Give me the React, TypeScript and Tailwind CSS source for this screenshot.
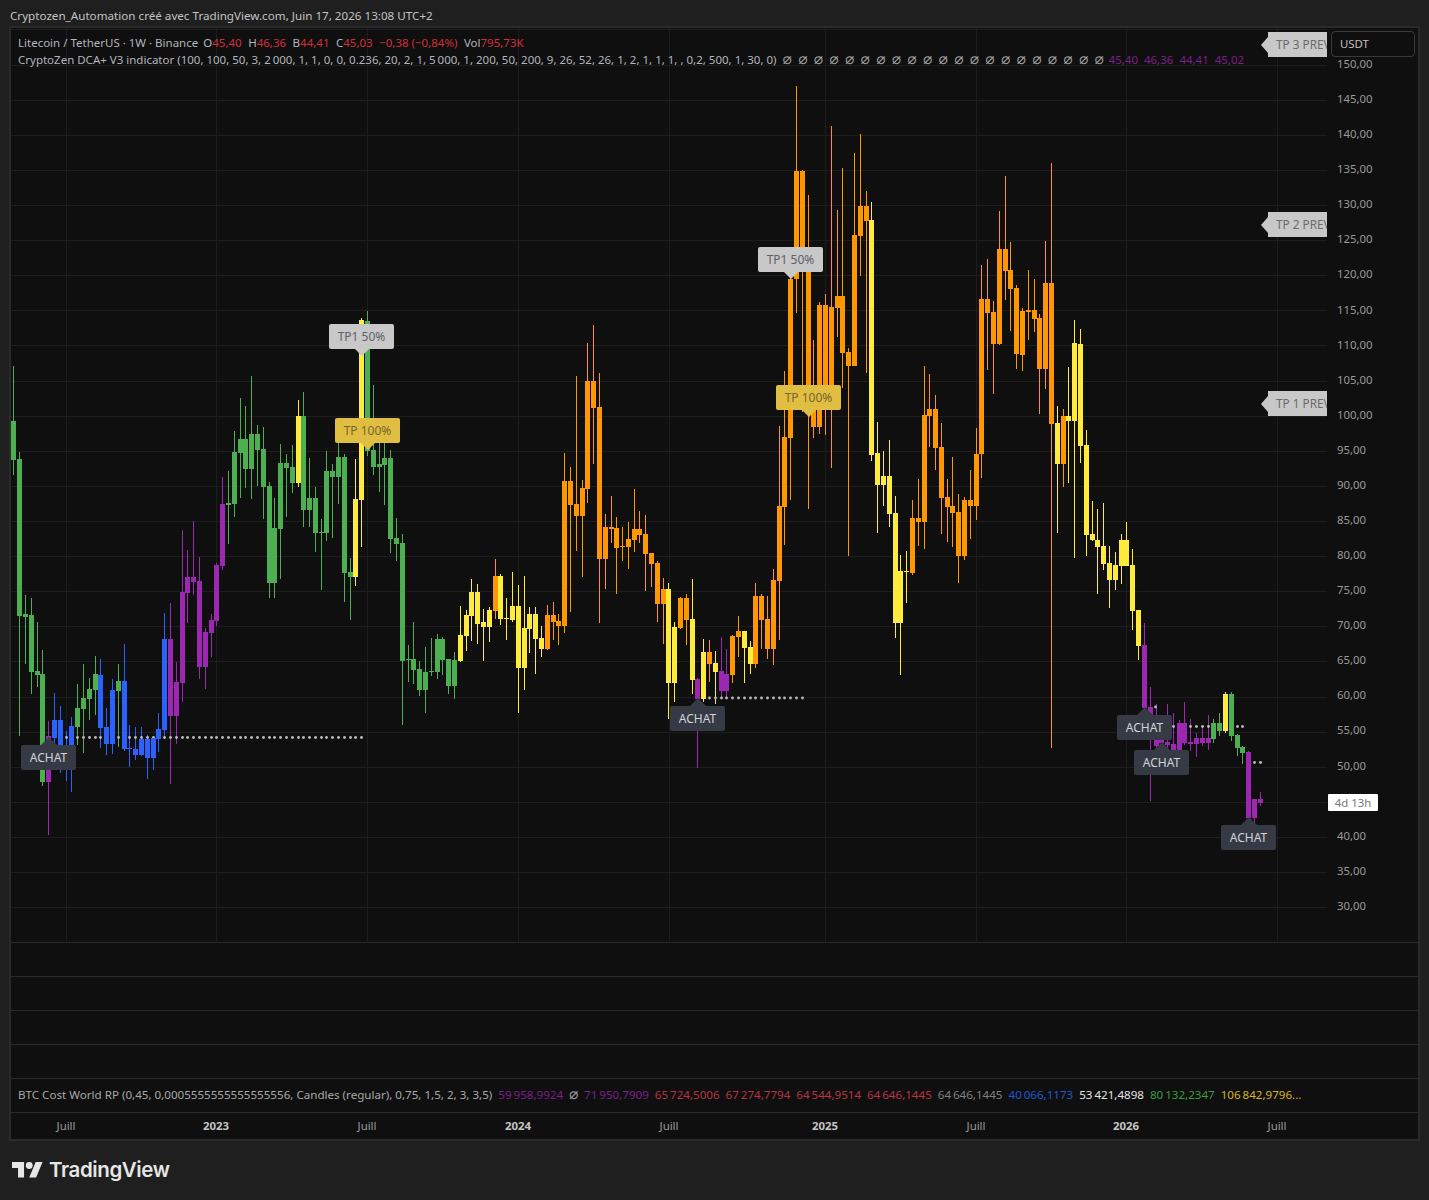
import React from "react";

type C = [string, number, number, number, number, number];

const COLORS: Record<string, string> = {
  g: "#4caf50",
  p: "#9c27b0",
  b: "#2962ff",
  y: "#ffeb3b",
  o: "#ff9800",
};

const candles: C[] = [
  ["g",13,421,460,366,475],["g",19,459,616,452,736],["g",25,614,617,595,664],["g",31,615,672,598,694],["g",37,671,675,622,687],["g",42,674,782,650,786],
  ["p",48,736,782,721,835],["b",54,720,738,693,770],["b",60,720,750,706,773],["b",66,745,760,731,781],["b",71,726,760,717,792],
  ["g",77,708,727,684,745],["g",83,698,709,664,753],["g",89,689,699,678,720],["g",95,674,690,656,715],["b",100,675,728,659,748],["b",106,727,744,708,755],["b",112,690,744,679,754],["g",118,681,691,664,747],["b",124,681,749,644,751],["b",129,748,749,725,767],["b",135,749,755,727,760],["b",141,739,755,727,756],["b",147,739,758,735,779],["b",153,738,758,736,770],["b",158,729,739,713,752],["b",164,639,730,613,739],
  ["p",170,639,716,603,784],["p",176,682,716,662,744],["p",182,592,683,530,702],["p",187,577,593,550,623],["p",193,577,582,521,595],["p",199,581,667,557,679],["p",205,632,667,628,689],["p",211,620,633,614,657],["p",216,565,621,563,626],["p",222,504,566,477,570],
  ["g",228,503,505,471,544],["g",234,452,504,431,517],["g",240,439,453,398,498],["g",245,439,469,406,488],["g",251,434,469,376,499],["g",257,434,450,425,486],["g",263,449,487,427,519],["g",269,486,583,482,598],["g",274,528,583,498,598],["g",280,463,529,444,579],["g",286,463,468,454,517],["g",292,467,483,445,493],
  ["y",298,416,483,400,487],["g",303,416,510,392,527],["g",309,498,510,458,527],["g",315,498,533,487,552],["g",321,532,533,519,590],["g",326,471,533,451,541],["g",332,471,477,464,538],["g",338,457,477,443,504],["g",344,457,573,454,602],["g",350,572,577,558,620],
  ["y",355,499,577,459,586],["y",361,320,500,318,547],["g",367,321,451,311,456],["g",373,450,467,385,475],["g",379,464,467,433,492],["g",384,458,465,440,505],["g",390,458,539,450,553],["g",396,538,544,518,561],["g",402,543,661,534,725],["g",408,659,660,645,682],["g",413,659,670,622,684],["g",419,669,690,661,696],["g",425,672,690,647,713],["g",431,671,672,638,676],["g",437,639,672,634,679],["g",442,639,660,637,675],["g",448,659,686,659,694],["g",454,660,686,652,699],
  ["y",460,635,661,606,662],["y",466,615,636,610,651],["y",471,592,616,579,641],["y",477,592,624,584,644],["y",483,622,627,609,661],["y",489,610,627,607,642],["o",495,576,611,559,619],["y",500,576,619,574,625],["y",506,618,619,598,640],["y",512,606,620,572,622],["y",518,606,668,585,713],["y",524,628,668,576,690],["y",529,614,629,607,653],["y",535,614,639,607,674],["y",541,638,649,626,657],
  ["o",547,615,649,605,650],["o",553,615,622,602,640],["o",558,621,626,614,645],["o",564,481,626,453,633],["o",570,481,505,467,612],["o",576,504,516,376,551],["o",582,488,516,480,577],["o",587,381,489,343,503],["o",593,381,408,325,464],["o",599,407,559,373,623],["o",605,527,559,514,589],["o",611,527,529,496,543],["o",616,528,548,517,594],["o",622,546,547,527,561],["o",628,539,547,522,569],["o",634,529,540,489,552],["o",639,529,535,511,543],["o",645,534,554,515,591],["o",651,553,564,553,587],["o",657,563,604,561,622],["o",663,589,604,578,644],
  ["y",668,589,683,583,719],["y",674,627,683,622,702],["o",680,598,628,597,629],["o",686,598,620,594,645],["y",692,619,680,579,694],["p",697,679,699,678,768],["y",703,652,699,639,702],["o",709,652,664,640,682],["y",715,663,672,651,704],["p",721,671,691,637,697],["p",726,674,691,649,699],["o",732,636,675,635,683],["o",738,631,637,616,657],["y",744,631,648,631,683],["y",750,647,664,641,674],["o",755,596,664,583,668],["o",761,596,620,594,649],["o",767,619,649,596,659],["o",773,580,649,569,665],["o",779,506,581,426,640],["o",784,437,507,371,545],["o",790,279,438,250,500],["o",796,171,279,86,313],["o",802,171,255,170,412],["o",808,250,408,195,509],["o",813,395,427,340,438],["o",819,305,427,302,434],["o",825,305,405,294,435],["o",831,307,405,126,468],["o",837,296,308,210,337],["o",842,296,353,168,388],["o",848,352,366,348,556],["o",854,235,366,153,366],["o",860,206,236,134,276],["o",866,206,221,191,373],
  ["y",871,220,455,202,461],["y",877,453,485,422,533],["y",883,476,485,451,506],["y",889,476,514,440,527],["y",895,513,623,496,638],["y",900,571,623,555,675],["y",906,571,572,551,603],
  ["o",912,518,573,500,575],["o",918,518,522,479,546],["o",924,415,522,366,549],["o",929,409,416,374,447],["o",935,409,448,395,470],["o",941,447,498,423,534],["o",947,497,507,479,542],["o",952,506,513,457,547],["o",958,512,556,494,583],["o",964,500,556,497,560],["o",970,500,506,470,539],["o",976,454,506,428,520],["o",981,299,454,265,478],["o",987,299,313,259,370],["o",993,312,344,301,394],["o",999,249,344,211,345],["o",1005,249,271,176,300],["o",1010,270,289,242,331],["o",1016,288,354,285,369],["o",1022,311,355,308,371],["o",1028,310,312,270,340],["o",1034,310,319,279,332],["o",1039,318,369,314,414],["o",1045,283,369,241,389],["o",1051,283,424,163,748],
  ["y",1057,423,464,406,533],["o",1063,416,464,409,487],["y",1068,416,421,367,483],["y",1074,343,421,320,558],["y",1080,344,446,329,463],["y",1086,445,535,430,556],["y",1092,534,540,501,541],["y",1097,540,547,509,594],["y",1103,546,564,503,570],["y",1109,563,580,546,608],["y",1115,565,580,552,590],["y",1121,540,566,534,584],["y",1126,540,566,522,566],["y",1132,565,611,549,630],["y",1138,610,646,610,660],
  ["p",1144,645,708,623,715],["p",1150,707,722,687,801],["p",1156,728,746,704,755],["p",1161,738,743,716,750],["p",1167,742,745,704,750],["p",1173,744,750,713,752],["p",1179,723,750,720,752],["p",1184,723,743,702,745],["p",1190,742,744,719,751],["p",1196,738,744,733,757],["p",1202,738,743,727,746],["p",1208,738,743,715,750],
  ["g",1213,723,739,719,743],["g",1219,723,731,713,736],["y",1225,694,731,692,733],["g",1231,694,736,692,741],["g",1237,735,748,734,756],["g",1242,747,753,746,764],["p",1248,752,818,751,818],["p",1254,799,818,799,824],["p",1260,799,803,792,806],
];

const dotsA = candles.filter((c) => c[1] >= 66 && c[1] <= 362).map((c) => [c[1], 737.5]);
const dotsB = candles.filter((c) => c[1] >= 709 && c[1] <= 803).map((c) => [c[1], 698]);
const dotsC = [[1155,707],[1173,726.5],[1190,726.5],[1196,726.5],[1202,726.5],[1208,726.5],[1237,726.5],[1242,726.5],[1254,762.5],[1260,762.5]];
const dots = [...dotsA, ...dotsB, ...dotsC];

const priceLevels = Array.from({ length: 26 }, (_, i) => 155 - i * 5);
const gridY = priceLevels.map((p) => Math.round(521 + (85 - p) * 7.022));
const gridX = [66, 216, 367, 518, 669, 825, 976, 1126, 1277];
const ticks = Array.from({ length: 25 }, (_, i) => `${150 - i * 5},00`);

function Chart() {
  return (
    <svg width="1316" height="914" viewBox="11 28 1316 914" className="block">
      <g shapeRendering="crispEdges">
        {gridY.map((y) => (
          <rect key={y} x="11" y={y} width="1316" height="1" fill="#1d1d1d" />
        ))}
        {gridX.map((x) => (
          <rect key={x} x={x} y="28" width="1" height="914" fill="#1d1d1d" />
        ))}
        {candles.map((c, i) => (
          <rect key={i} x={c[1]} y={c[4]} width="1" height={c[5] - c[4]} fill={COLORS[c[0]]} />
        ))}
      </g>
      {dots.map((d, i) => (
        <circle key={i} cx={d[0] + 0.5} cy={d[1]} r="1.4" fill="#bdbdbd" />
      ))}
      <g shapeRendering="crispEdges">
        {candles.map((c, i) => (
          <rect key={i} x={c[1] - 2} y={c[2]} width="5" height={Math.max(c[3] - c[2], 1)} fill={COLORS[c[0]]} />
        ))}
      </g>
    </svg>
  );
}

function Achat({ className }: { className: string }) {
  return (
    <div className={`absolute w-[55px] h-[25px] rounded-[2px] bg-[#363a45] text-[#d1d4dc] text-[12px] flex items-center justify-center ${className}`}>
      <span className="absolute bottom-full left-1/2 -translate-x-1/2 w-0 h-0 border-x-[8px] border-x-transparent border-b-[8px] border-b-[#363a45]" />
      ACHAT
    </div>
  );
}

function Tp({ className, text, gold }: { className: string; text: string; gold?: boolean }) {
  return (
    <div className={`absolute w-[65px] h-[25px] rounded-[2px] text-[12px] flex items-center justify-center ${gold ? "bg-[#e0be41] text-[#76672d]" : "bg-[#c8c8c8] text-[#5f6068]"} ${className}`}>
      <span className={`absolute top-full left-1/2 -translate-x-1/2 w-0 h-0 border-x-[7px] border-x-transparent border-t-[7px] ${gold ? "border-t-[#e0be41]" : "border-t-[#c8c8c8]"}`} />
      {text}
    </div>
  );
}

function Preview({ className, text }: { className: string; text: string }) {
  return (
    <div className={`absolute h-[25px] w-[80px] bg-[#c8c8c8] text-[#6b6b6b] text-[11.8px] flex items-center pl-[8px] whitespace-nowrap ${className}`}>
      <span className="absolute right-full top-1/2 -translate-y-1/2 w-0 h-0 border-y-[8px] border-y-transparent border-r-[7px] border-r-[#c8c8c8]" />
      {text}
    </div>
  );
}

const FONT = "font-['Noto_Sans','Open_Sans',sans-serif]";

export default function App() {
  const empties = "⌀ ".repeat(21).trim();
  return (
    <div className={`w-[1429px] h-[1200px] bg-[#1f1f1f] flex flex-col ${FONT}`}>
      <div className="h-[26px] pl-[10px] flex items-center pt-[5px] text-[11.65px] text-[#c2c2c2] whitespace-nowrap">
        Cryptozen_Automation créé avec TradingView.com, Juin 17, 2026 13:08 UTC+2
      </div>

      <div className="ml-[9px] w-[1411px] h-[1115px] border-2 border-[#2a2a2a] bg-[#0f0f0f] flex flex-col">
        <div className="relative h-[914px] flex">
          <div className="relative w-[1316px] h-[914px] overflow-hidden">
            <Chart />
            <Preview className="left-[1257px] top-[4px]" text="TP 3 PREVIEW" />
            <Preview className="left-[1257px] top-[184px]" text="TP 2 PREVIEW" />
            <Preview className="left-[1257px] top-[363px]" text="TP 1 PREVIEW" />
            <Tp className="left-[318px] top-[296px]" text="TP1 50%" />
            <Tp className="left-[324px] top-[390px]" text="TP 100%" gold />
            <Tp className="left-[747px] top-[219px]" text="TP1 50%" />
            <Tp className="left-[765px] top-[357px]" text="TP 100%" gold />
            <Achat className="left-[10px] top-[717px]" />
            <Achat className="left-[659px] top-[678px]" />
            <Achat className="left-[1106px] top-[687px]" />
            <Achat className="left-[1123px] top-[722px]" />
            <Achat className="left-[1210px] top-[797px]" />
            <div className="absolute left-[7px] top-[6px] text-[11.5px] leading-[17px] text-[#b2b5be] whitespace-nowrap">
              <div className="flex">
                <span className="mr-[5px]">Litecoin / TetherUS · 1W · Binance</span>
                <span className="flex gap-[6.5px]">
                  <span>O<span className="text-[#cf2f3c]">45,40</span></span>
                  <span>H<span className="text-[#cf2f3c]">46,36</span></span>
                  <span>B<span className="text-[#cf2f3c]">44,41</span></span>
                  <span>C<span className="text-[#cf2f3c]">45,03</span></span>
                  <span className="text-[#cf2f3c]">−0,38 (−0,84%)</span>
                  <span>Vol<span className="text-[#cf2f3c]">795,73K</span></span>
                </span>
              </div>
              <div className="flex items-baseline">
                <span className="mr-[6px]">CryptoZen DCA+ V3 indicator (100, 100, 50, 3, 2{"\u2009"}000, 1, 1, 0, 0, 0.236, 20, 2, 1, 5{"\u2009"}000, 1, 200, 50, 200, 9, 26, 52, 26, 1, 2, 1, 1, 1, , 0,2, 500, 1, 30, 0)</span>
                <span className="mr-[5px] font-['DejaVu_Sans'] text-[15px] text-[#a0a0a0] [word-spacing:1.8px]">{empties}</span>
                <span className="flex gap-[6px] text-[#7b1f8c]">
                  <span>45,40</span><span>46,36</span><span>44,41</span><span>45,02</span>
                </span>
              </div>
            </div>
          </div>

          <div className="relative flex-1 flex flex-col justify-between pt-[29px] pb-[29px] items-start pl-[10px] text-[11.4px] leading-[14px] text-[#9a9a9a]">
            {ticks.map((t) => (
              <span key={t} className={t === "45,00" ? "invisible" : ""}>{t}</span>
            ))}
            <div className="absolute left-[4px] top-[3px] w-[84px] h-[26px] rounded-[4px] border border-[#3a3a3a] bg-[#0f0f0f] text-[#c0c0c0] flex items-center pl-[8px]">USDT</div>
            <div className="absolute left-[1px] top-[766px] w-[50px] h-[17px] rounded-[1px] bg-white text-[#777] flex items-center justify-center">4d 13h</div>
          </div>
        </div>

        {[0, 1, 2, 3].map((i) => (
          <div key={i} className="h-[34px] border-t border-[#2a2a2a]" />
        ))}

        <div className="h-[34px] border-t border-[#2a2a2a] flex items-center pl-[7px] pb-[2px] text-[11.6px] leading-[17px] text-[#a8a8a8] whitespace-nowrap gap-[6px]">
          <span>BTC Cost World RP (0,45, 0,0005555555555555556, Candles (regular), 0,75, 1,5, 2, 3, 3,5)</span>
          <span className="text-[#7b1f8c]">59{"\u2009"}958,9924</span>
          <span className="text-[#a0a0a0] font-['DejaVu_Sans'] text-[15px]">⌀</span>
          <span className="text-[#7b1f8c]">71{"\u2009"}950,7909</span>
          <span className="text-[#b83344]">65{"\u2009"}724,5006</span>
          <span className="text-[#b83344]">67{"\u2009"}274,7794</span>
          <span className="text-[#b83344]">64{"\u2009"}544,9514</span>
          <span className="text-[#b83344]">64{"\u2009"}646,1445</span>
          <span className="text-[#808080]">64{"\u2009"}646,1445</span>
          <span className="text-[#2256d0]">40{"\u2009"}066,1173</span>
          <span className="text-[#e4e4e4]">53{"\u2009"}421,4898</span>
          <span className="text-[#3c9a40]">80{"\u2009"}132,2347</span>
          <span className="text-[#d4b420]">106{"\u2009"}842,9796...</span>
        </div>

        <div className="h-[27px] border-t border-[#2a2a2a] grid grid-cols-[110px_190px_112px_190px_112px_200px_102px_198px_104px] items-center text-center text-[11.4px] text-[#9a9a9a]">
          <span>Juill</span>
          <span className="font-bold text-[#c4c4c4]">2023</span>
          <span>Juill</span>
          <span className="font-bold text-[#c4c4c4]">2024</span>
          <span>Juill</span>
          <span className="font-bold text-[#c4c4c4]">2025</span>
          <span>Juill</span>
          <span className="font-bold text-[#c4c4c4]">2026</span>
          <span>Juill</span>
        </div>
      </div>

      <div className="flex items-center h-[20px] mt-[19px] ml-[12px] gap-[6px] text-[#e6e6e6]">
        <svg width="31" height="16" viewBox="0 4 36 18.5" fill="currentColor" preserveAspectRatio="none">
          <path d="M14 22H7V11H0V4h14v18zM28 22h-8l7.5-18h8L28 22z" />
          <circle cx="20" cy="8" r="4" />
        </svg>
        <span className="font-['Inter',sans-serif] font-semibold text-[20.5px] tracking-[-0.4px] leading-none">TradingView</span>
      </div>
    </div>
  );
}
